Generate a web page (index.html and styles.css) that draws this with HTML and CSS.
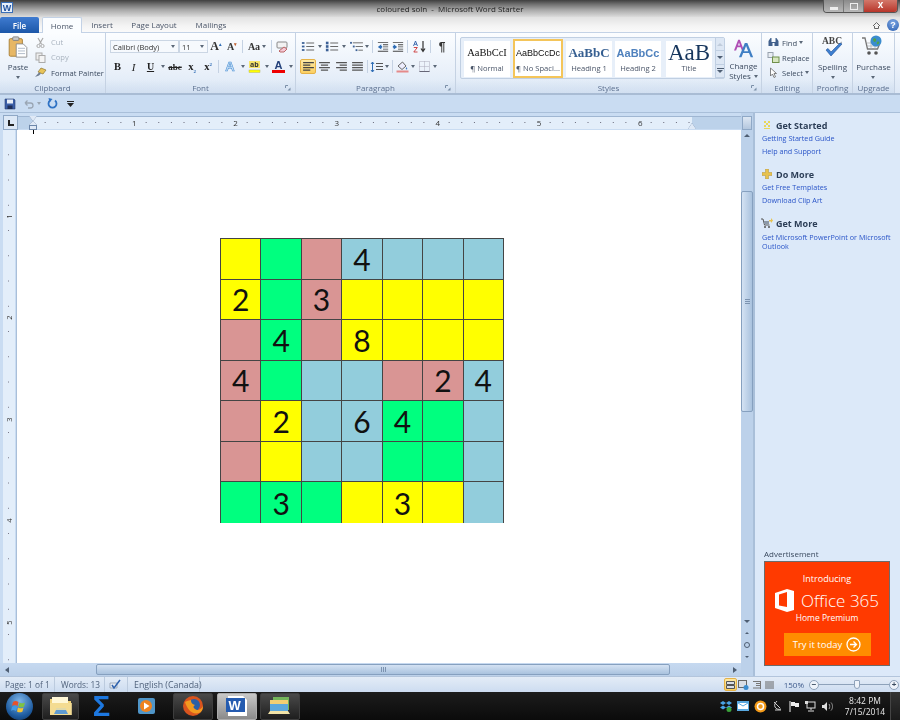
FILE: index.html
```html
<!DOCTYPE html>
<html lang="en">
<head>
<meta charset="utf-8">
<title>coloured soln - Microsoft Word Starter</title>
<link rel="stylesheet" href="styles.css">
</head>
<body>
<svg class="defs" width="0" height="0">
  <defs>
    <symbol id="i-bullets" viewBox="0 0 16 12"><g fill="#3a5f95"><rect x="1" y="1" width="3" height="2"/><rect x="1" y="5" width="3" height="2"/><rect x="1" y="9" width="3" height="2"/></g><g fill="#555"><rect x="6" y="1.5" width="9" height="1"/><rect x="6" y="5.5" width="9" height="1"/><rect x="6" y="9.5" width="9" height="1"/></g></symbol>
    <symbol id="i-numbers" viewBox="0 0 16 12"><g fill="#3a5f95"><rect x="1" y="0.5" width="3" height="3"/><rect x="1" y="4.5" width="3" height="3"/><rect x="1" y="8.5" width="3" height="3"/></g><g fill="#555"><rect x="6" y="1.5" width="9" height="1"/><rect x="6" y="5.5" width="9" height="1"/><rect x="6" y="9.5" width="9" height="1"/></g></symbol>
    <symbol id="i-multi" viewBox="0 0 16 12"><g fill="#3a5f95"><rect x="1" y="1" width="2" height="2"/><rect x="4" y="5" width="2" height="2"/><rect x="7" y="9" width="2" height="2"/></g><g fill="#666"><rect x="4" y="1.5" width="11" height="1"/><rect x="7" y="5.5" width="8" height="1"/><rect x="10" y="9.5" width="5" height="1"/></g></symbol>
    <symbol id="i-outdent" viewBox="0 0 14 12"><path fill="#444" d="M1 1h12v1H1zM7 3.5h6v1H7zM7 6h6v1H7zM7 8.5h6v1H7zM1 11h12v1H1z"/><path fill="#2f6db5" d="M1 6.5 5 3.5v2h1v2H5v2z"/></symbol>
    <symbol id="i-indent" viewBox="0 0 14 12"><path fill="#444" d="M1 1h12v1H1zM7 3.5h6v1H7zM7 6h6v1H7zM7 8.5h6v1H7zM1 11h12v1H1z"/><path fill="#2f6db5" d="M6 6.5 2 3.5v2H1v2h1v2z"/></symbol>
    <symbol id="i-left" viewBox="0 0 12 10"><path fill="#444" d="M0 0h12v1.4H0zM0 2.8h8v1.4H0zM0 5.6h12V7H0zM0 8.4h8v1.4H0z"/></symbol>
    <symbol id="i-center" viewBox="0 0 12 10"><path fill="#555" d="M0 0h12v1.4H0zM2 2.8h8v1.4H2zM0 5.6h12V7H0zM2 8.4h8v1.4H2z"/></symbol>
    <symbol id="i-right" viewBox="0 0 12 10"><path fill="#555" d="M0 0h12v1.4H0zM4 2.8h8v1.4H4zM0 5.6h12V7H0zM4 8.4h8v1.4H4z"/></symbol>
    <symbol id="i-justify" viewBox="0 0 12 10"><path fill="#555" d="M0 0h12v1.4H0zM0 2.8h12v1.4H0zM0 5.6h12V7H0zM0 8.4h12v1.4H0z"/></symbol>
    <symbol id="i-launch" viewBox="0 0 6 6"><path fill="none" stroke="#7b8fa8" d="M.5 3V.5H3"/><path fill="#7b8fa8" d="M5.5 5.5H2.5L5.5 2.5z"/></symbol>
  </defs>
</svg>

<div class="window">
  <header class="titlebar">
    <div class="wordmark"><span>W</span></div>
    <div class="title">coloured soln &nbsp;-&nbsp; Microsoft Word Starter</div>
    <div class="winctl">
      <span class="ctl"><i class="ctl-min"></i></span>
      <span class="ctl"><i class="ctl-max"></i></span>
      <span class="ctl ctl-close">x</span>
    </div>
  </header>

  <nav class="tabs">
    <span class="tab tab-file">File</span>
    <span class="tab tab-home">Home</span>
    <span class="tab tab-insert">Insert</span>
    <span class="tab tab-layout">Page Layout</span>
    <span class="tab tab-mail">Mailings</span>
    <span class="tabs-end">
      <svg width="9" height="8" viewBox="0 0 9 8"><path d="M1 5 4.500 1.500 8 5M2.500 5v2.500h4V5" fill="none" stroke="#666"/></svg>
      <span class="help">?</span>
    </span>
  </nav>

  <section class="ribbon">
    <div class="group g-clip">
      <div class="g-body clip-body">
        <div class="big paste">
          <svg width="20" height="22" viewBox="0 0 22 25"><rect x="1" y="3" width="15" height="20" rx="1.500" fill="#e7b765" stroke="#a67c32"/><rect x="5" y="1" width="7" height="4" rx="1" fill="#c9c9c9" stroke="#7d7d7d"/><path d="M9 9h8l4 4v11H9z" fill="#fff" stroke="#8a8a8a"/><path d="M11 14h8M11 17h8M11 20h8" stroke="#a8b4c4"/></svg>
          <span class="big-label">Paste</span>
          <i class="drop"></i>
        </div>
        <div class="stack clip-stack">
          <div class="sitem off"><svg width="11" height="11" viewBox="0 0 11 11"><path d="M3 1 6.500 7M8 1 4.500 7" stroke="#aaa" fill="none" stroke-width="1.200"/><circle cx="3.500" cy="9" r="1.600" fill="none" stroke="#aaa"/><circle cx="7.500" cy="9" r="1.600" fill="none" stroke="#aaa"/></svg><span>Cut</span></div>
          <div class="sitem off"><svg width="11" height="11" viewBox="0 0 11 11"><rect x="1" y="1" width="6" height="7" fill="#eee" stroke="#aaa"/><rect x="4" y="3.500" width="6" height="7" fill="#f4f4f4" stroke="#aaa"/></svg><span>Copy</span></div>
          <div class="sitem"><svg width="13" height="11" viewBox="0 0 13 11"><path d="M7 1l5 2-3 4-5-2z" fill="#e8c45a" stroke="#8d7430" stroke-width=".7"/><path d="M5 5.500 1 10l4-1.500L7 6.500z" fill="#6f7d90"/></svg><span>Format Painter</span></div>
        </div>
      </div>
      <div class="g-label">Clipboard</div>
    </div>

    <div class="group g-font">
      <div class="g-body rows">
        <div class="row">
          <div class="combo c-font"><span>Calibri (Body)</span><i class="drop"></i></div>
          <div class="combo c-size"><span>11</span><i class="drop"></i></div>
          <span class="btn w16 glyph serif">A<sup class="up">▴</sup></span>
          <span class="btn w16 glyph serif small">A<sup class="up dn">▾</sup></span>
          <i class="sep"></i>
          <span class="btn w24 glyph-sm"><b>Aa</b><i class="drop"></i></span>
          <i class="sep"></i>
          <span class="btn w16"><svg width="13" height="12" viewBox="0 0 13 12"><rect x="1" y="1" width="10" height="6" rx="1" fill="#f2f2f2" stroke="#888"/><path d="M3 10 8 6l3 2-3 3H4z" fill="#f4c9d6" stroke="#b66"/></svg></span>
        </div>
        <div class="row row-2">
          <span class="btn w15 fmt"><b>B</b></span>
          <span class="btn w17 fmt"><em>I</em></span>
          <span class="btn w17 fmt under">U</span><i class="drop w7"></i>
          <span class="btn w18 fmt strike">abc</span>
          <span class="btn w16 fmt"><b>x<sub class="blue">2</sub></b></span>
          <span class="btn w16 fmt"><b>x<sup class="blue">2</sup></b></span>
          <i class="sep"></i>
          <span class="btn w18"><span class="a-fx">A</span></span><i class="drop w7"></i>
          <span class="btn w17"><svg width="13" height="13" viewBox="0 0 13 13"><rect x="1" y="1" width="11" height="7" fill="#f7e56a"/><text x="2" y="7" font-size="7" font-family="Open Sans" font-weight="700" fill="#333">ab</text><rect x="1" y="10" width="11" height="2.500" fill="#ffff00" stroke="#b5b56a" stroke-width=".5"/></svg></span><i class="drop w7"></i>
          <span class="btn w17 a-red">A</span><i class="drop w7"></i>
        </div>
      </div>
      <div class="g-label">Font<svg class="launch"><use href="#i-launch"/></svg></div>
    </div>

    <div class="group g-para">
      <div class="g-body rows">
        <div class="row">
          <span class="btn w16 lst"><svg width="14" height="11"><use href="#i-bullets"/></svg></span><i class="drop w8"></i>
          <span class="btn w16 lst"><svg width="14" height="11"><use href="#i-numbers"/></svg></span><i class="drop w8"></i>
          <span class="btn w16 lst"><svg width="15" height="11"><use href="#i-multi"/></svg></span><i class="drop w6"></i>
          <i class="sep"></i>
          <span class="btn w16"><svg width="12" height="11"><use href="#i-outdent"/></svg></span>
          <span class="btn w14"><svg width="12" height="11"><use href="#i-indent"/></svg></span>
          <i class="sep"></i>
          <span class="btn w18"><svg width="13" height="13" viewBox="0 0 13 13"><path d="M.5 6 2.500 1 4.500 6M1.300 4.300h2.400" fill="none" stroke="#2f5fa8" stroke-width=".9"/><path d="M.8 7.500h3.500L.8 12h3.700" fill="none" stroke="#c33" stroke-width=".9"/><path d="M10 1v10M8 8.500 10 11.500 12 8.500" fill="none" stroke="#333" stroke-width="1.200"/></svg></span>
          <i class="sep"></i>
          <span class="btn w18 pil">¶</span>
        </div>
        <div class="row row-2">
          <span class="btn w16 active"><svg width="11" height="9"><use href="#i-left"/></svg></span>
          <span class="btn w17"><svg width="11" height="9"><use href="#i-center"/></svg></span>
          <span class="btn w16"><svg width="11" height="9"><use href="#i-right"/></svg></span>
          <span class="btn w16"><svg width="11" height="9"><use href="#i-justify"/></svg></span>
          <i class="sep"></i>
          <span class="btn w14"><svg width="14" height="12" viewBox="0 0 14 12"><path d="M2.500 1v10M1 3l1.500-2L4 3M1 9l1.500 2L4 9" fill="none" stroke="#2f6db5"/><path fill="#555" d="M6 2h7v1H6zM6 5h7v1H6zM6 8h7v1H6z"/></svg></span><i class="drop w6"></i>
          <i class="sep"></i>
          <span class="btn w14"><svg width="13" height="13" viewBox="0 0 13 13"><path d="M2 6 6.500 2 10 6 6 9.500z" fill="#eef" stroke="#666"/><path d="M10.500 7c1 1.500 1 2.500 0 2.500S9.500 8.500 10.500 7z" fill="#4a7cc0"/><rect x="0.500" y="10.500" width="12" height="2" fill="#e58a8a"/></svg></span><i class="drop w8"></i>
          <span class="btn w14"><svg width="11" height="11" viewBox="0 0 11 11"><path d="M.500.500h10v10H.500zM5.500.500v10M.500 5.500h10" fill="none" stroke="#aab" stroke-dasharray="1 1"/><path d="M.5 10.500h10" stroke="#667"/></svg></span><i class="drop w8"></i>
        </div>
      </div>
      <div class="g-label">Paragraph<svg class="launch"><use href="#i-launch"/></svg></div>
    </div>

    <div class="group g-styles">
      <div class="g-body styles-body">
        <div class="gallery">
          <div class="style s-normal"><span class="s-sample">AaBbCcI</span><span class="s-name">¶ Normal</span></div>
          <div class="style s-nospace"><span class="s-sample">AaBbCcDc</span><span class="s-name">¶ No Spaci...</span></div>
          <div class="style s-h1"><span class="s-sample">AaBbC</span><span class="s-name">Heading 1</span></div>
          <div class="style s-h2"><span class="s-sample">AaBbCc</span><span class="s-name">Heading 2</span></div>
          <div class="style s-title"><span class="s-sample">AaB</span><span class="s-name">Title</span></div>
          <div class="gal-scroll">
            <span class="gal-btn"><i class="tri-up off-tri"></i></span>
            <span class="gal-btn"><i class="tri-down"></i></span>
            <span class="gal-btn"><i class="tri-more"></i></span>
          </div>
        </div>
        <div class="big change">
          <svg width="26" height="24" viewBox="0 0 26 24"><path d="M1 15 6 2h2l5 13h-2.500L9 11H5l-1.500 4zM5.800 9h2.400L7 5.500z" fill="#b04fb5"/><path d="M7 23 14 6h3l7 17h-3l-2-5h-7l-2 5zM13 16h5l-2.500-6.500z" fill="#3f7fc4"/></svg>
          <span class="big-label">Change<br>Styles <i class="drop inl"></i></span>
        </div>
      </div>
      <div class="g-label">Styles<svg class="launch"><use href="#i-launch"/></svg></div>
    </div>

    <div class="group g-edit">
      <div class="g-body stack edit-stack">
        <div class="sitem"><svg width="12" height="11" viewBox="0 0 12 11"><path d="M1 9V4l2-3h1v4h4V1h1l2 3v5H7V6H5v3z" fill="#41608c"/></svg><span>Find</span><i class="drop"></i></div>
        <div class="sitem"><svg width="12" height="11" viewBox="0 0 12 11"><rect x="0.500" y="0.500" width="5" height="5" fill="#e8edf3" stroke="#98a2ae"/><rect x="5" y="5" width="6.500" height="5.500" fill="#d6e6c0" stroke="#6f8f4a"/></svg><span>Replace</span></div>
        <div class="sitem"><svg width="12" height="12" viewBox="0 0 12 12"><path d="M3 1v8l2-2 1.500 3.500 1.500-.7L6.500 6.500H9z" fill="#fff" stroke="#666" stroke-width=".8"/></svg><span>Select</span><i class="drop"></i></div>
      </div>
      <div class="g-label">Editing</div>
    </div>

    <div class="group g-proof">
      <div class="g-body big-only">
        <div class="big">
          <svg width="24" height="24" viewBox="0 0 24 24"><text x="1" y="9" font-size="9.500" font-family="Liberation Serif" font-weight="700" fill="#444">ABC</text><path d="M5 15l5 6L21 9l-2-1-9 9-3-3.500z" fill="#3d7fd1" stroke="#1f4f96" stroke-width=".6"/></svg>
          <span class="big-label">Spelling</span>
          <i class="drop"></i>
        </div>
      </div>
      <div class="g-label">Proofing</div>
    </div>

    <div class="group g-up">
      <div class="g-body big-only">
        <div class="big">
          <svg width="24" height="24" viewBox="0 0 24 24"><path d="M1 3h3l2.500 11h10L19 8" fill="none" stroke="#777" stroke-width="1.300"/><path d="M6 8h12M6 11h11M10 6v8M14 6v8" stroke="#aaa" stroke-width=".7"/><circle cx="8" cy="18" r="1.800" fill="#555"/><circle cx="15" cy="18" r="1.800" fill="#555"/><circle cx="15" cy="6" r="5.500" fill="#3a8ccf"/><path d="M12 4c2-2 4 0 3 2s-3 1-3-2zM16 7c2-1 3 0 2 1.500s-3 1-2-1.500z" fill="#4fa34a"/></svg>
          <span class="big-label">Purchase</span>
          <i class="drop"></i>
        </div>
      </div>
      <div class="g-label">Upgrade</div>
    </div>
  </section>

  <div class="qat">
    <svg width="12" height="12" viewBox="0 0 12 12"><path d="M1 1h9l1 1v9H1z" fill="#3b5fa8" stroke="#2a4273" stroke-width=".6"/><rect x="3" y="1.500" width="6" height="4" fill="#e8eef8"/><rect x="3.500" y="7.500" width="5" height="3.500" fill="#1f2f58"/></svg>
    <svg class="q-undo" width="10" height="10" viewBox="0 0 10 10"><path d="M1 4h5.500a2.500 2.500 0 0 1 0 5H4M1 4l2.500-2.500M1 4l2.500 2.500" fill="none" stroke="#9aa6b4" stroke-width="1.300"/></svg>
    <i class="drop q-drop"></i>
    <svg width="11" height="11" viewBox="0 0 11 11"><path d="M3 2.500a4 4 0 1 0 5 0" fill="none" stroke="#2f72c4" stroke-width="1.800"/><path d="M1.500 0 5.500 1 2.500 4.500z" fill="#2f72c4"/></svg>
    <svg class="q-more" width="7" height="6" viewBox="0 0 7 6"><path d="M0 0h7v1H0zM0 2h7L3.500 6z" fill="#222"/></svg>
  </div>

  <div class="workspace">
    <main class="docpane">
      <div class="ruler-h">
        <span class="ruler-corner"><i></i></span>
        <div class="ruler-track">
          <span class="r-margin-l"></span>
          <div class="r-body">
            <span class="r-n">1</span><span class="r-n">2</span><span class="r-n">3</span><span class="r-n">4</span><span class="r-n">5</span><span class="r-n">6</span>
            <i class="indent-top"></i><i class="indent-bottom"></i><i class="indent-right"></i>
          </div>
          <span class="r-margin-r"></span>
        </div>
      </div>
      <div class="doc-row">
        <div class="ruler-v">
          <div class="rv-inner">
            <span>1</span><span>2</span><span>3</span><span>4</span><span>5</span>
          </div>
        </div>
        <div class="page">
          <i class="caret"></i>
          <div class="grid">
            <div class="c y"></div><div class="c g"></div><div class="c p"></div><div class="c b">4</div><div class="c b"></div><div class="c b"></div><div class="c b"></div>
            <div class="c y">2</div><div class="c g"></div><div class="c p">3</div><div class="c y"></div><div class="c y"></div><div class="c y"></div><div class="c y"></div>
            <div class="c p"></div><div class="c g">4</div><div class="c p"></div><div class="c y">8</div><div class="c y"></div><div class="c y"></div><div class="c y"></div>
            <div class="c p">4</div><div class="c g"></div><div class="c b"></div><div class="c b"></div><div class="c p"></div><div class="c p">2</div><div class="c b">4</div>
            <div class="c p"></div><div class="c y">2</div><div class="c b"></div><div class="c b">6</div><div class="c g">4</div><div class="c g"></div><div class="c b"></div>
            <div class="c p"></div><div class="c y"></div><div class="c b"></div><div class="c b"></div><div class="c g"></div><div class="c g"></div><div class="c b"></div>
            <div class="c g"></div><div class="c g">3</div><div class="c g"></div><div class="c y"></div><div class="c y">3</div><div class="c y"></div><div class="c b"></div>
          </div>
        </div>
      </div>
      <div class="hscroll">
        <i class="tri-left"></i>
        <div class="h-thumb"><i class="grip-v"></i></div>
        <i class="tri-right"></i>
      </div>
    </main>

    <div class="vscroll">
      <span class="vs-ruler"></span>
      <span class="vs-arrow"><i class="tri-up"></i></span>
      <div class="vs-track"><div class="vs-thumb"><i class="grip-h"></i></div></div>
      <span class="vs-arrow"><i class="tri-down"></i></span>
      <span class="vs-nav"><i class="tri-up dbl"></i></span>
      <span class="vs-nav"><i class="dot"></i></span>
      <span class="vs-nav"><i class="tri-down dbl"></i></span>
    </div>

    <aside class="sidebar">
      <div class="sb-sections">
        <section class="sb-sec">
          <h3><svg width="10" height="10" viewBox="0 0 10 10"><path d="M2 1h2v2H2zM6 1h2v2H6zM2 5h2v2H2zM6 5h2v2H6zM4 3h2v2H4zM2 8h6v1H2z" fill="#e9d65a"/></svg>Get Started</h3>
          <a>Getting Started Guide</a>
          <a>Help and Support</a>
        </section>
        <section class="sb-sec">
          <h3><svg width="10" height="10" viewBox="0 0 10 10"><path d="M3.500 0h3v3.500H10v3H6.500V10h-3V6.500H0v-3h3.500z" fill="#e7c24f" stroke="#b2923a" stroke-width=".5"/></svg>Do More</h3>
          <a>Get Free Templates</a>
          <a>Download Clip Art</a>
        </section>
        <section class="sb-sec">
          <h3><svg class="sb-cart" width="12" height="11" viewBox="0 0 12 11"><path d="M0 1h2l1.500 6h5" fill="none" stroke="#555"/><rect x="3" y="3" width="5" height="3" fill="#8c99a8"/><circle cx="4" cy="9" r="1" fill="#555"/><circle cx="8" cy="9" r="1" fill="#555"/><path d="M8 2h2V0l2 2.500L10 5V3.500H8z" fill="#e7c24f"/></svg>Get More</h3>
          <a class="wrap">Get Microsoft PowerPoint or Microsoft Outlook</a>
        </section>
      </div>
      <div class="ad-wrap">
        <div class="ad-label">Advertisement</div>
        <div class="ad">
          <div class="ad-intro">Introducing</div>
          <div class="ad-brand">
            <svg width="20" height="23" viewBox="0 0 20 23"><path d="M0 4 12 0l7 2v19l-7 2L0 19V4zM12 3 4 5.500v11L12 18z" fill="#fff" fill-rule="evenodd"/></svg>
            <span>Office 365</span>
          </div>
          <div class="ad-sub">Home Premium</div>
          <div class="ad-btn">Try it today
            <svg width="15" height="15" viewBox="0 0 15 15"><circle cx="7.500" cy="7.500" r="6.500" fill="none" stroke="#fff" stroke-width="1.300"/><path d="M4 7.500h6.500M7.500 4.500l3 3-3 3" fill="none" stroke="#fff" stroke-width="1.300"/></svg>
          </div>
        </div>
      </div>
    </aside>
  </div>

  <footer class="status">
    <span class="st st-page">Page: 1 of 1</span>
    <span class="st st-words">Words: 13</span>
    <span class="st st-check"><svg width="13" height="11" viewBox="0 0 13 11"><path d="M1 4h7v5H1z" fill="#e4ebf4" stroke="#8a97a8" stroke-width=".7"/><path d="M3 6l2 3 6-8" fill="none" stroke="#2f62ad" stroke-width="1.500"/></svg></span>
    <span class="st st-lang">English (Canada)</span>
    <span class="status-right">
      <span class="view active"><svg width="9" height="8" viewBox="0 0 9 8"><path d="M.5.500h8v3h-8zM.5 4.500h8v3h-8z" fill="#d9dee6" stroke="#555"/></svg></span>
      <span class="view"><svg width="11" height="10" viewBox="0 0 11 10"><rect x=".5" y=".5" width="8" height="7" fill="#d9dee6" stroke="#666"/><circle cx="8" cy="7.500" r="2.500" fill="#3a8ccf"/></svg></span>
      <span class="view"><svg width="9" height="8" viewBox="0 0 9 8"><path d="M1 .5h7M4 2.500h4M4 4.500h4M1 7h7" stroke="#777" fill="none"/><path d="M8.500 0v8" stroke="#777"/></svg></span>
      <span class="view"><svg width="9" height="8" viewBox="0 0 9 8"><path d="M0 1h9M0 3h9M0 5h9M0 7h9" stroke="#666"/></svg></span>
      <span class="zoom-val">150%</span>
      <span class="zbtn">−</span>
      <span class="zslider"><i class="ztick"></i><i class="zthumb"></i></span>
      <span class="zbtn">+</span>
    </span>
  </footer>

  <div class="taskbar">
    <span class="orb"><svg width="20" height="20" viewBox="0 0 20 20"><path d="M3 6c2-1.500 3.500-1 5.500 0L7.500 10C5.500 9 4 8.500 2 10z" fill="#e8532c"/><path d="M9.500 6.500c2 1 3.500 1.300 5.500 0L14 10.500c-2 1.300-3.500 1-5.500 0z" fill="#7dc242"/><path d="M2 11c2-1.500 3.500-1 5.200 0L6 15c-2-1-3-1.300-5-.3z" fill="#3f9be8"/><path d="M8 11.500c2 1 3.500 1.300 5.500 0L12.500 15.500c-2 1.300-3.500 1-5.500 0z" fill="#f5c431"/></svg></span>
    <span class="tb-btn t-explorer"><svg width="24" height="22" viewBox="0 0 24 22"><path d="M1 4h8l2 2h11v14H1z" fill="#f1d379"/><path d="M3 2h16v6H3z" fill="#fff7d6"/><rect x="7" y="13" width="10" height="5" fill="#8fc3e8"/><path d="M1 8h22v12H1z" fill="#f5df98" opacity=".8"/><path d="M7 15h10l2 4H5z" fill="#5f9bd1"/></svg></span>
    <span class="tb-plain t-sigma">Σ</span>
    <span class="tb-plain t-media"><svg width="19" height="18" viewBox="0 0 19 18"><rect x="1" y="1" width="17" height="16" rx="2" fill="#4f95c8"/><circle cx="9" cy="9" r="6" fill="#ee8320"/><path d="M7 5.500v7l5.500-3.500z" fill="#fff"/></svg></span>
    <span class="tb-btn t-fox"><svg width="22" height="22" viewBox="0 0 22 22"><circle cx="11" cy="11" r="10" fill="#d9541e"/><circle cx="12" cy="10" r="6" fill="#2a5fa5"/><path d="M3 7c2 7 7 13 14 11 3-1 4-4 4-7-2 4-6 5-8 3-2-1-2-3 0-4-3-1-4-2-4-5C6 6 4 6 3 7z" fill="#f29a1f"/></svg></span>
    <span class="tb-btn tb-on t-word"><svg width="24" height="22" viewBox="0 0 24 22"><path d="M3 1h15l4 4v16H3z" fill="#fff"/><rect x="1" y="3" width="19" height="14" fill="#245bb0"/><text x="3.500" y="15" font-size="13" font-family="Liberation Sans" font-weight="700" fill="#fff">W</text></svg></span>
    <span class="tb-btn t-mail"><svg width="24" height="20" viewBox="0 0 24 20"><path d="M5 1h16v13H5z" fill="#73b45a"/><path d="M2 4h18v13H2z" fill="#f3cf74"/><path d="M2 8h18v9H2z" fill="#5da8dd"/><path d="M2 15h18l2 3H0z" fill="#f2e3a8"/></svg></span>
    <span class="tray">
      <svg width="12" height="12" viewBox="0 0 12 12"><path d="M3 1 6 3 3 5 0 3zM9 1l3 2-3 2-3-2zM3 5.500l3 2-3 2-3-2zM9 5.500l3 2-3 2-3-2z" fill="#4aa3e6"/><circle cx="9" cy="9.500" r="2.500" fill="#3aa13a"/></svg>
      <svg width="12" height="10" viewBox="0 0 12 10"><rect width="12" height="10" fill="#58a8e0"/><path d="M1 2h10v6H1z" fill="#fff"/><path d="M1 2l5 3 5-3" fill="none" stroke="#58a8e0"/></svg>
      <svg width="13" height="13" viewBox="0 0 13 13"><circle cx="6.500" cy="6.500" r="6" fill="#f39a18"/><circle cx="6.500" cy="6.500" r="3" fill="none" stroke="#fff" stroke-width="1.500"/></svg>
      <svg width="12" height="12" viewBox="0 0 12 12"><path d="M2 2l6 6M5 1c-2 2-3 4-2 6s4 3 6 2" fill="none" stroke="#ccc"/><path d="M3 10h6" stroke="#ccc"/></svg>
      <svg width="11" height="11" viewBox="0 0 11 11"><path d="M1 0v11" stroke="#eee"/><path d="M2 1h4v1h4v4H6V5H2z" fill="#eee"/></svg>
      <svg width="12" height="11" viewBox="0 0 12 11"><rect x="2" y="1" width="8" height="6" fill="none" stroke="#ddd"/><path d="M6 7v2M3 10h6" stroke="#ddd"/><rect x="0" y="0" width="3" height="3" fill="#ddd"/></svg>
      <svg width="12" height="11" viewBox="0 0 12 11"><path d="M0 4h2l3-3v9L2 7H0z" fill="#ddd"/><path d="M7 3c1 1 1 4 0 5M9 1.500c2 2 2 6 0 8" fill="none" stroke="#999"/></svg>
    </span>
    <span class="clock"><span>8:42 PM</span><span>7/15/2014</span></span>
    <span class="show-desktop"></span>
  </div>
</div>
</body>
</html>
```

FILE: styles.css
```css
* { box-sizing: border-box; }
html, body { margin: 0; padding: 0; }
body { width: 900px; height: 720px; overflow: hidden; font-family: "Open Sans", "Liberation Sans", sans-serif; font-size: 8px; color: #3b4a5f; }
.defs { position: absolute; }
i { display: block; font-style: normal; }

.window { width: 900px; height: 720px; display: flex; flex-direction: column; background: #c9dcf2; overflow: hidden; }

/* soft edges of the downscaled capture */
.titlebar, .tabs, .ribbon, .qat, .ruler-h, .ruler-v, .hscroll, .vscroll, .sb-sections, .ad-label, .status, .taskbar { filter: blur(.3px); }

/* title bar */
.titlebar { height: 17px; display: flex; align-items: flex-start; background: linear-gradient(180deg, #3f3f3f 0, #6d6d6d 4px, #a9a9a9 10px, #dcdcdc 17px); position: relative; }
.wordmark { width: 12px; height: 11px; margin: 2px 0 0 1px; background: #e8f0fb; border: 1px solid #3a6fb8; display: flex; align-items: center; justify-content: center; font: 700 9px "Liberation Sans", sans-serif; color: #24549f; }
.title { flex: 1; text-align: center; padding: 2px 0 0 64px; font-size: 8px; line-height: 13px; color: #222; white-space: nowrap; }
.winctl { display: flex; width: 75px; height: 13px; margin-right: 2px; border: 1px solid #555; border-top: 0; border-radius: 0 0 4px 4px; overflow: hidden; }
.ctl { width: 20px; display: flex; align-items: center; justify-content: center; background: linear-gradient(#8a8a8a, #b8b8b8); border-right: 1px solid #777; }
.ctl-close { flex: 1; background: linear-gradient(#d3776a, #b8352a); color: #fff; font: 700 10px "Liberation Sans", sans-serif; border: 0; line-height: 10px; padding-bottom: 2px; }
.ctl-min { width: 8px; height: 3px; background: #eee; margin-top: 4px; }
.ctl-max { width: 8px; height: 7px; border: 1px solid #eee; }

/* tabs */
.tabs { height: 16px; display: flex; align-items: stretch; background: linear-gradient(#e2e2e2, #f4f4f4 60%, #fafafa); border-bottom: 1px solid #c3d2e6; font-size: 8px; color: #4a5568; }
.tab { display: flex; align-items: center; justify-content: center; line-height: 15px; }
.tab-file { width: 39px; background: linear-gradient(#3f7bd0, #1c57a8); color: #fff; border-radius: 2px 2px 0 0; margin-bottom: -1px; font-weight: 600; }
.tab-home { width: 40px; margin-left: 3px; background: #fbfdff; border: 1px solid #c3d2e6; border-bottom: 0; border-radius: 2px 2px 0 0; margin-bottom: -1px; position: relative; z-index: 1; }
.tab-insert { width: 40px; }
.tab-layout { width: 64px; }
.tab-mail { width: 50px; }
.tabs-end { margin-left: auto; display: flex; align-items: center; gap: 6px; padding-right: 1px; }
.help { width: 12px; height: 12px; border-radius: 50%; background: radial-gradient(circle at 50% 30%, #7fa8e4, #2b5fb0); color: #fff; font: 700 9px "Liberation Sans", sans-serif; text-align: center; line-height: 12px; }

/* ribbon */
.ribbon { height: 62px; display: flex; background: linear-gradient(#fbfdff, #eaf1fa 60%, #dde8f6); border-bottom: 2px solid #a9bcd4; }
.group { display: flex; flex-direction: column; border-right: 1px solid #c5d2e3; flex: none; }
.g-body { height: 47px; flex: none; }
.g-label { height: 13px; position: relative; text-align: center; line-height: 15px; font-size: 8px; color: #5d7190; background: linear-gradient(rgba(200,216,236,0), rgba(200,216,236,.55)); white-space: nowrap; }
.launch { position: absolute; right: 4px; top: 5px; width: 6px; height: 6px; }
.g-clip { width: 106px; }
.g-font { width: 190px; }
.g-para { width: 160px; }
.g-styles { width: 306px; }
.g-edit { width: 51px; }
.g-proof { width: 40px; }
.g-up { width: 42px; }

.clip-body { display: flex; padding-left: 5px; }
.big { display: flex; flex-direction: column; align-items: center; }
.big-label { line-height: 9.500px; font-size: 8px; text-align: center; color: #3b4a5f; }
.paste { width: 26px; padding-top: 3px; }
.paste .big-label { margin-top: 4px; }
.paste .drop { margin-top: 4px; }
.stack { display: flex; flex-direction: column; }
.clip-stack { margin-left: 3px; padding-top: 2px; gap: 1px; }
.sitem { height: 15px; display: flex; align-items: center; gap: 4px; white-space: nowrap; font-size: 7.600px; color: #3b4a5f; }
.sitem.off { color: #a9b3bf; }
.sitem svg { flex: none; width: 13px; }

.drop { width: 0; height: 0; border-left: 2.500px solid transparent; border-right: 2.500px solid transparent; border-top: 3px solid #5b6878; flex: none; }
.drop.inl { display: inline-block; vertical-align: 1px; margin-left: 1px; }
.w7, .w8, .w6 { border-left-width: 2px; border-right-width: 2px; margin: 0 1.500px; }
.w8 { margin: 0 2px; }
.w6 { margin: 0 1px; }

.rows { display: flex; flex-direction: column; padding: 6px 0 0 4px; gap: 5px; }
.row { height: 15px; display: flex; align-items: center; }
.combo { height: 13px; display: flex; align-items: center; justify-content: space-between; padding: 0 3px 0 2px; background: #f6f9fd; border: 1px solid #cbd6e4; font-size: 7.500px; color: #333; white-space: nowrap; }
.c-font { width: 69px; }
.c-size { width: 29px; margin-right: 0; }
.btn { height: 15px; flex: none; display: flex; align-items: center; justify-content: center; position: relative; color: #333; }
.w14 { width: 14px; } .w15 { width: 15px; } .w16 { width: 16px; } .w17 { width: 17px; } .w18 { width: 18px; } .w24 { width: 24px; gap: 2px; }
.sep { width: 1px; height: 13px; margin: 0 2px; background: #c5d2e3; flex: none; }
.glyph { font: 700 12px "Liberation Serif", serif; color: #333; }
.glyph.small { font-size: 10px; }
.up { font-size: 5px; color: #2f6db5; margin-top: -5px; line-height: 1; }
.dn { color: #c06030; }
.glyph-sm b { font: 700 10px "Liberation Serif", serif; }
.fmt { font: 10px "Liberation Serif", serif; color: #222; }
.fmt em { font-size: 11px; }
.fmt b { font-size: 10.500px; }
.under { text-decoration: underline; font-weight: 700; }
.strike { text-decoration: line-through; font-size: 9px; font-weight: 700; }
.blue { color: #2f6db5; font-size: 5px; line-height: 0; }
.a-fx { font: 700 13px "Liberation Sans", sans-serif; color: #cfe4f8; -webkit-text-stroke: .6px #4a90d4; }
.a-red { font: 700 11px "Liberation Sans", sans-serif; color: #23407a; border-bottom: 3px solid #e00; height: 13px; line-height: 10px; margin: 0 2px; width: 13px; }
.pil { font: 700 12px "Liberation Sans", sans-serif; color: #333; }
.active { background: linear-gradient(#fde9a4, #fbcf61); border: 1px solid #e5b248; border-radius: 2px; }

/* styles gallery */
.styles-body { display: flex; padding: 4px 0 0 4px; }
.gallery { width: 265px; height: 42px; display: flex; gap: 3px; padding: 3px 0 0 3px; background: #e7eff9; border: 1px solid #c0cfe2; border-radius: 2px; position: relative; }
.style { width: 46px; height: 36px; background: #fff; display: flex; flex-direction: column; align-items: center; overflow: hidden; padding-top: 3px; flex: none; }
.s-sample { height: 18px; line-height: 18px; white-space: nowrap; color: #111; font: 11px/18px "Liberation Serif", serif; }
.s-name { font-size: 7.600px; line-height: 12px; white-space: nowrap; color: #4a5568; }
.s-normal .s-sample { font-size: 10.500px; }
.s-nospace { width: 50px; margin-top: -2px; height: 39px; border: 2px solid #f4c55a; padding-top: 3px; }
.s-nospace .s-sample { font: 9px/18px "Liberation Sans", sans-serif; }
.s-h1 .s-sample { font: 700 13px/18px "Liberation Serif", serif; color: #365f91; }
.s-h1 { width: 46px; }
.s-h2 .s-sample { font: 700 11px/18px "Liberation Sans", sans-serif; color: #4f81bd; }
.s-title { margin-left: 2px; padding-top: 0; }
.s-title .s-sample { height: 21px; font: 23px/23px "Liberation Serif", serif; color: #17365d; }
.gal-scroll { width: 11px; display: flex; flex-direction: column; margin: -3px 0 0 0; }
.gal-btn { height: 13.500px; display: flex; align-items: center; justify-content: center; background: #dde7f4; border: 1px solid #c0cfe2; border-width: 0 0 1px 1px; }
.change { width: 35px; padding-top: 1px; margin-left: 1px; }
.change .big-label { margin-top: 3px; }
.edit-stack { padding: 2px 0 0 5px; gap: 0; }
.edit-stack .sitem { gap: 2px; }
.big-only { padding-top: 2px; display: flex; justify-content: center; }
.big-only .big-label { margin-top: 3px; }
.big-only .drop { margin-top: 4px; }

.tri-up { width: 0; height: 0; border: 3px solid transparent; border-top: 0; border-bottom: 3px solid #4e5e73; }
.tri-down { width: 0; height: 0; border: 3px solid transparent; border-bottom: 0; border-top: 3px solid #4e5e73; }
.tri-more { width: 7px; height: 5px; border-top: 1px solid #4e5e73; position: relative; }
.tri-more::after { content: ""; position: absolute; left: .5px; top: 1px; border: 3px solid transparent; border-bottom: 0; border-top: 3px solid #4e5e73; }
.off-tri { border-bottom-color: #c0ccdb; }
.tri-left { width: 0; height: 0; border: 3px solid transparent; border-left: 0; border-right: 4px solid #4e5e73; }
.tri-right { width: 0; height: 0; border: 3px solid transparent; border-right: 0; border-left: 4px solid #4e5e73; }

/* quick access */
.qat { height: 18px; display: flex; align-items: center; padding: 0 0 0 4px; background: #c9dcf2; border-bottom: 1px solid #a9bfd9; }
.q-undo { margin-left: 8px; }
.q-drop { margin: 0 6px 0 3px; border-top-color: #9aa6b4; }
.q-more { margin-left: 9px; }

/* workspace */
.workspace { flex: 1; min-height: 0; display: flex; }
.docpane { width: 741px; display: flex; flex-direction: column; flex: none; }

.ruler-h { height: 17px; display: flex; background: #c9dcf2; position: relative; z-index: 1; }
.ruler-corner { width: 15px; height: 15px; margin: 2px 0 0 3px; display: flex; align-items: center; justify-content: center; background: #dce8f6; border: 1px solid #8fa8c6; flex: none; }
.ruler-corner i { width: 6px; height: 6px; border-left: 2px solid #222; border-bottom: 2px solid #222; }
.ruler-track { flex: 1; height: 13px; margin-top: 3px; display: flex; border-top: 1px solid #9fb6d2; background: #e3eefa; }
.r-margin-l { width: 15px; background: #bcd2ea; flex: none; }
.r-body { width: 659px; position: relative; display: flex; font-size: 8px; color: #333; line-height: 12px; padding-left: 97px; background: repeating-linear-gradient(90deg, transparent 0 12px, #667 12px 13px); background-size: 12.630px 1px; background-repeat: repeat-x; background-position: 0 5px; }
.r-n { width: 9px; flex: none; text-align: left; background: #e3eefa; height: 12px; padding: 0 2px; margin-right: 92.200px; }
.indent-top { position: absolute; left: -4px; top: -1px; width: 0; height: 0; border: 4px solid transparent; border-top: 5px solid #dfe9f6; border-bottom: 0; filter: drop-shadow(0 0 .5px #44618a); }
.indent-bottom { position: absolute; left: -4px; top: 8px; width: 8px; height: 5px; background: #dfe9f6; border: 1px solid #6c87aa; }
.indent-bottom::before { content: ""; position: absolute; left: -1px; top: -5px; border: 4px solid transparent; border-bottom: 4px solid #dfe9f6; border-top: 0; filter: drop-shadow(0 0 .5px #44618a); }
.indent-right { position: absolute; left: 655px; top: 6px; width: 0; height: 0; border: 4px solid transparent; border-bottom: 6px solid #dfe9f6; border-top: 0; filter: drop-shadow(0 0 .5px #44618a); }
.r-margin-r { flex: 1; background: #bcd2ea; }

.doc-row { flex: 1; min-height: 0; display: flex; }
.ruler-v { width: 17px; flex: none; padding-left: 3px; background: #c9dcf2; border-right: 1px solid #a9bfd9; }
.rv-inner { width: 12px; height: 100%; background: #e3eefa repeating-linear-gradient(180deg, transparent 0 24px, #778 24px 25px); background-size: 1px 25.250px; background-repeat: repeat-y; background-position: 5px 0; display: flex; flex-direction: column; align-items: center; padding-top: 82px; gap: 92.400px; font-size: 7.500px; line-height: 9px; color: #333; }
.rv-inner span { display: block; background: #e3eefa; transform: rotate(-90deg); }
.page { flex: 1; background: #fff; padding: 108px 0 0 203px; position: relative; overflow: hidden; }
.caret { position: absolute; left: 16px; top: 0; width: 1px; height: 4px; background: #000; }
.grid { width: 284px; height: 285px; display: grid; grid-template-columns: repeat(7, 1fr); grid-template-rows: repeat(7, 1fr); border-top: 1px solid #444; border-left: 1px solid #444; }
.c { display: flex; align-items: center; justify-content: center; border-right: 1px solid #444; border-bottom: 1px solid #444; font: 400 30px/1 "Lato", "Open Sans", sans-serif; color: #111; }
.c:nth-last-child(-n+7) { border-bottom: 0; }
.c.y { background: #ffff00; }
.c.g { background: #00ff7f; }
.c.p { background: #d99594; }
.c.b { background: #92cddc; }

.hscroll { height: 13px; flex: none; display: flex; align-items: center; padding: 0 4px 0 5px; background: linear-gradient(#c6d9f0, #bcd1ea); }
.h-thumb { width: 574px; height: 11px; margin: 0 auto 0 87px; display: flex; align-items: center; justify-content: center; background: linear-gradient(#d4e2f3, #a9c2de); border: 1px solid #86a0bf; border-radius: 2px; }
.grip-v { width: 5px; height: 5px; background: repeating-linear-gradient(90deg, #7c93b0 0 1px, transparent 1px 2px); }

.vscroll { width: 14px; flex: none; display: flex; flex-direction: column; align-items: center; background: #bcd1ea; border-right: 2px solid #a9bfd9; padding-bottom: 13px; }
.vs-ruler { width: 10px; height: 14px; margin-top: 3px; flex: none; background: linear-gradient(#dde7f3, #b4c7de); border: 1px solid #8fa8c6; }
.vs-arrow { height: 11px; flex: none; display: flex; align-items: center; justify-content: center; }
.vs-nav { height: 12px; flex: none; display: flex; align-items: center; justify-content: center; }
.vs-track { flex: 1; width: 100%; padding-top: 50px; }
.vs-thumb { height: 221px; display: flex; align-items: center; justify-content: center; background: linear-gradient(90deg, #d4e2f3, #a9c2de); border: 1px solid #86a0bf; border-radius: 2px; }
.grip-h { width: 5px; height: 5px; background: repeating-linear-gradient(180deg, #7c93b0 0 1px, transparent 1px 2px); }
.dot { width: 6px; height: 6px; border: 1px solid #4e5e73; border-radius: 50%; }
.dbl { border-width: 2.500px; }

/* sidebar */
.sidebar { flex: 1; min-width: 0; display: flex; flex-direction: column; background: #dce9f9; padding-left: 7px; }
.sb-sections { display: flex; flex-direction: column; gap: 9px; padding-top: 5px; }
.sb-sec { display: flex; flex-direction: column; }
.sb-sec h3 { margin: 0; height: 14px; display: flex; align-items: center; gap: 4px; font-size: 9px; font-weight: 700; color: #2c3e57; white-space: nowrap; }
.sb-cart { margin-left: -1px; margin-right: -1px; }
.sb-sec a { font-size: 7.200px; line-height: 13px; color: #2a55c8; white-space: nowrap; }
.sb-sec a.wrap { white-space: normal; line-height: 9px; margin-top: 3px; }
.ad-wrap { margin-top: auto; padding: 0 0 10px 2px; }
.ad-label { font-size: 8px; line-height: 14px; color: #3b4a5f; }
.ad { width: 126px; height: 105px; display: flex; flex-direction: column; align-items: center; background: #ff3a00; border: 1px solid #6b6b6b; color: #fff; padding-top: 11px; }
.ad-intro { font-size: 9px; line-height: 12px; }
.ad-brand { display: flex; align-items: center; gap: 6px; height: 24px; margin-top: 3px; font-size: 17px; font-family: "Open Sans", sans-serif; font-weight: 300; white-space: nowrap; }
.ad-sub { font-size: 8.500px; line-height: 12px; margin-top: 0; }
.ad-btn { width: 87px; height: 23px; margin-top: 9px; display: flex; align-items: center; justify-content: center; gap: 4px; background: #ff8c00; font-size: 9.500px; white-space: nowrap; }

/* status bar */
.status { height: 16px; flex: none; display: flex; align-items: stretch; background: linear-gradient(#e3ecf7, #cddcf0); border-top: 1px solid #b3c5dc; font-size: 8px; color: #50627c; white-space: nowrap; }
.st { display: flex; align-items: center; border-right: 1px solid #bccbde; padding-left: 5px; }
.st-page { width: 55px; font-size: 8.300px; }
.st-words { width: 50px; padding-left: 6px; font-size: 8.300px; }
.st-check { width: 23px; padding-left: 4px; }
.st-lang { width: 72px; padding-left: 6px; font-size: 8.800px; }
.status-right { margin-left: auto; display: flex; align-items: center; padding-right: 1px; }
.view { width: 13px; height: 13px; display: flex; align-items: center; justify-content: center; }
.view.active { background: linear-gradient(#fde9a4, #fbcf61); border: 1px solid #e5b248; margin-right: 0; }
.zoom-val { margin: 0 5px 0 8px; color: #3f5b8c; font-size: 8px; }
.zbtn { width: 10px; height: 10px; border-radius: 50%; background: #eef3fa; border: 1px solid #8ea2ba; display: flex; align-items: center; justify-content: center; font: 700 8px/1 "Liberation Sans", sans-serif; color: #3a4a5e; flex: none; }
.zslider { width: 70px; height: 1px; margin: 0; background: #8ea2ba; position: relative; }
.ztick { position: absolute; left: 35px; top: -2px; width: 1px; height: 5px; background: #8ea2ba; }
.zthumb { position: absolute; left: 35px; top: -4px; width: 6px; height: 9px; background: #eef3fa; border: 1px solid #8ea2ba; border-radius: 1px 1px 3px 3px; }

/* task bar */
.taskbar { height: 28px; flex: none; display: flex; align-items: center; background: linear-gradient(#1c1c1c, #0b0b0b); color: #ddd; padding-left: 6px; }
.orb { width: 27px; height: 27px; flex: none; border-radius: 50%; display: flex; align-items: center; justify-content: center; background: radial-gradient(circle at 50% 30%, #7db5e8, #1d5a9e 65%, #0f2f55); margin-right: 9px; }
.tb-btn { width: 38px; height: 27px; margin-right: 4px; flex: none; display: flex; align-items: center; justify-content: center; background: linear-gradient(#4a4a4a, #1e1e1e); border: 1px solid #3d3d3d; border-radius: 2px; }
.tb-on { background: linear-gradient(#c8c8c8, #8a8a8a); border-color: #aaa; }
.t-explorer { margin-right: 3px; width: 37px; }
.tb-plain { width: 40px; flex: none; display: flex; align-items: center; justify-content: center; }
.t-sigma { font: 700 29px/1 "Liberation Sans", sans-serif; color: #1d78e0; width: 37px; margin-left: 1px; }
.t-media { width: 53px; }
.t-fox { width: 40px; }
.t-word { width: 40px; margin-right: 3px; }
.t-mail { width: 40px; }
.tray { margin-left: auto; display: flex; align-items: center; gap: 5px; }
.clock { width: 50px; margin-left: 6px; display: flex; flex-direction: column; align-items: center; font-size: 8.500px; line-height: 11px; color: #e8e8e8; white-space: nowrap; }
.show-desktop { width: 10px; height: 28px; background: linear-gradient(#333, #1a1a1a); border-left: 1px solid #444; flex: none; }
```
